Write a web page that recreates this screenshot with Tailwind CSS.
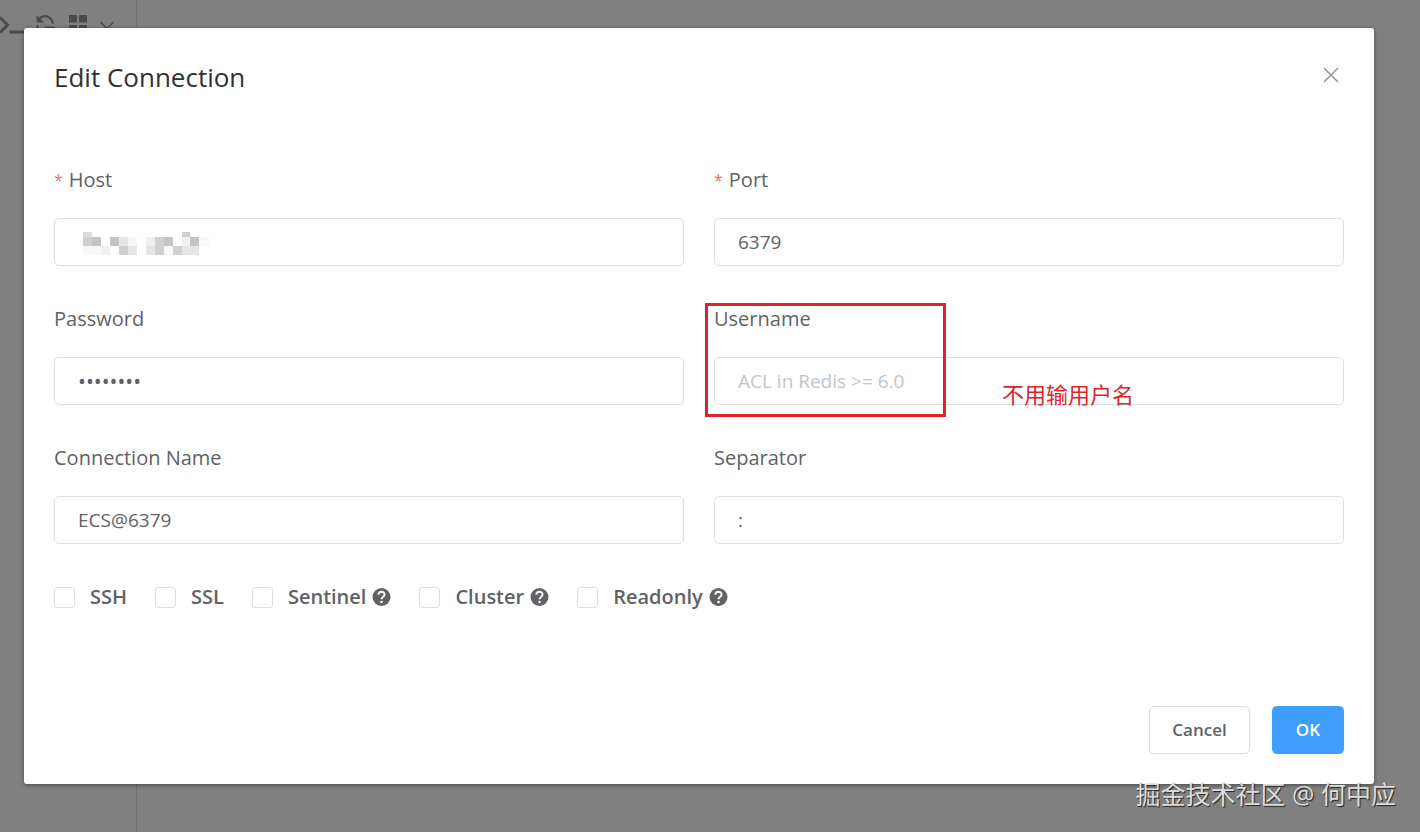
<!DOCTYPE html>
<html lang="en">
<head>
<meta charset="utf-8">
<meta name="viewport" content="width=device-width, initial-scale=1">
<title>Edit Connection</title>
<script src="https://cdn.jsdelivr.net/npm/@tailwindcss/browser@4"></script>
</head>
<body class="relative flex min-h-screen bg-[#808080] font-['Segoe_UI','Open_Sans','Noto_Sans_CJK_SC',sans-serif] text-[#606266]">

<!-- Dimmed page behind the dialog -->
<aside class="w-[137px] shrink-0 overflow-hidden border-r border-[#737373] pt-3" aria-hidden="true">
  <svg class="h-6 w-[120px]" viewBox="0 12 120 24" fill="none">
    <path d="M0 17.500L7.500 25L0 32.500" stroke="#4a4b4c" stroke-width="3"/>
    <path d="M9.500 32H26" stroke="#4a4b4c" stroke-width="3"/>
    <path d="M39 19C43 14.500 51 15 53 23.500" stroke="#4a4b4c" stroke-width="2.400"/>
    <path d="M36.500 15V22.500H44Z" fill="#4a4b4c"/>
    <path d="M37 25L38.500 29M46.500 27.500H54V33Z" stroke="#4a4b4c" stroke-width="2"/>
    <path d="M69 15h8v7.500h-8zM79 15h8v7.500h-8zM69 25h8v8h-8zM79 25h8v8h-8z" fill="#4a4b4c"/>
    <path d="M100.500 22L107 28.500L113.500 22" stroke="#4a4b4c" stroke-width="1.300"/>
  </svg>
</aside>

<div class="absolute inset-x-0 top-0 pt-7 pr-[46px] pb-12 pl-6">
<section role="dialog" aria-labelledby="title" class="relative rounded-[3px] bg-white p-[30px] shadow-[0_1px_4px_rgba(0,0,0,0.45)]">
  <header class="flex h-[92px] items-start justify-between">
    <h1 id="title" class="text-[26px] leading-[38px] text-[#303133]">Edit Connection</h1>
    <button type="button" aria-label="Close" class="mt-2 mr-1 size-[18px]">
      <svg viewBox="0 0 18 18" fill="none" stroke="#909399" stroke-width="1.500"><path d="M2 2L16 16M16 2L2 16"/></svg>
    </button>
  </header>

  <form>
    <div class="grid grid-cols-2 gap-x-[30px]">
      <div class="mb-[23px]">
        <label for="host" class="mb-2 flex text-[20px] leading-[60px]"><span class="mr-1.5 text-[16px] text-[#f56c6c]">*</span>Host</label>
        <div class="relative">
          <input id="host" type="text" class="block h-12 w-full rounded-[5px] border border-[#dcdfe6] px-[23px] text-[19px]">
          <svg class="absolute top-3 left-7 h-7 w-32" viewBox="0 0 128 28" shape-rendering="crispEdges" aria-hidden="true">
            <path fill="#f8f8f8" d="M1 16h18v9h-18zM118 7h9v9h-9zM46 7h9v9h-9zM82 16h9v9h-9z"/>
            <path fill="#f0f0f0" d="M19 16h9v9h-9zM64 7h9v9h-9zM100 7h8v9h-8z"/>
            <path fill="#e5e5e5" d="M37 7h9v9h-9zM46 16h9v9h-9zM64 16h9v9h-9zM100 16h17v9h-17z"/>
            <path fill="#dadada" d="M1 2h9v5H1z"/>
            <path fill="#d0d0d0" d="M1 7h9v9H1zM37 16h9v9h-9zM73 7h9v18h-9zM91 16h9v9h-9zM100 2h8v5h-8z"/>
            <path fill="#c4c4c4" d="M10 7h9v9h-9zM28 7h9v9h-9zM82 7h9v9h-9zM108 7h9v9h-9z"/>
          </svg>
        </div>
      </div>
      <div class="mb-[23px]">
        <label for="port" class="mb-2 flex text-[20px] leading-[60px]"><span class="mr-1.5 text-[16px] text-[#f56c6c]">*</span>Port</label>
        <input id="port" type="text" value="6379" class="block h-12 w-full rounded-[5px] border border-[#dcdfe6] px-[23px] text-[19px]">
      </div>
      <div class="mb-[23px]">
        <label for="password" class="mb-2 block text-[20px] leading-[60px]">Password</label>
        <input id="password" type="password" value="password" class="block h-12 w-full rounded-[5px] border border-[#dcdfe6] px-[23px] text-[21px]">
      </div>
      <div class="relative mb-[23px]">
        <label for="username" class="mb-2 block text-[20px] leading-[60px]">Username</label>
        <input id="username" type="text" placeholder="ACL in Redis &gt;= 6.0" class="block h-12 w-full rounded-[5px] border border-[#dcdfe6] px-[23px] text-[19px] placeholder:text-[#c0c4cc]">
        <div class="absolute top-[14px] -left-[9px] h-[114px] w-[241px] border-3 border-[#d9252b]"></div>
        <p class="absolute top-[89px] left-[288px] text-[22px] leading-8 text-[#d9252b]">不用输用户名</p>
      </div>
      <div class="mb-[23px]">
        <label for="name" class="mb-2 block text-[20px] leading-[60px]">Connection Name</label>
        <input id="name" type="text" value="ECS@6379" class="block h-12 w-full rounded-[5px] border border-[#dcdfe6] px-[23px] text-[19px]">
      </div>
      <div class="mb-[23px]">
        <label for="separator" class="mb-2 block text-[20px] leading-[60px]">Separator</label>
        <input id="separator" type="text" value=":" class="block h-12 w-full rounded-[5px] border border-[#dcdfe6] px-[23px] text-[19px]">
      </div>
    </div>

    <div class="flex h-[60px] items-center gap-7 text-[20px] font-semibold">
      <label class="flex items-center gap-[15px]"><input type="checkbox" class="size-[21px] appearance-none rounded-[3px] border border-[#dcdfe6]">SSH</label>
      <label class="flex items-center gap-[15px]"><input type="checkbox" class="size-[21px] appearance-none rounded-[3px] border border-[#dcdfe6]">SSL</label>
      <label class="flex items-center gap-[15px]"><input type="checkbox" class="size-[21px] appearance-none rounded-[3px] border border-[#dcdfe6]">
        <span class="flex items-center gap-1.5">Sentinel
          <svg class="size-[19px]" viewBox="0 0 19 19" fill="none"><circle cx="9.500" cy="9" r="9" fill="#606266"/><path d="M6.400 6.800C6.400 2.800 12.600 2.800 12.600 6.500C12.600 8.700 9.500 8.700 9.500 11.300" stroke="#fff" stroke-width="2"/><circle cx="9.500" cy="14" r="1.300" fill="#fff"/></svg>
        </span></label>
      <label class="flex items-center gap-[15px]"><input type="checkbox" class="size-[21px] appearance-none rounded-[3px] border border-[#dcdfe6]">
        <span class="flex items-center gap-1.5">Cluster
          <svg class="size-[19px]" viewBox="0 0 19 19" fill="none"><circle cx="9.500" cy="9" r="9" fill="#606266"/><path d="M6.400 6.800C6.400 2.800 12.600 2.800 12.600 6.500C12.600 8.700 9.500 8.700 9.500 11.300" stroke="#fff" stroke-width="2"/><circle cx="9.500" cy="14" r="1.300" fill="#fff"/></svg>
        </span></label>
      <label class="flex items-center gap-[15px]"><input type="checkbox" class="size-[21px] appearance-none rounded-[3px] border border-[#dcdfe6]">
        <span class="flex items-center gap-1.5">Readonly
          <svg class="size-[19px]" viewBox="0 0 19 19" fill="none"><circle cx="9.500" cy="9" r="9" fill="#606266"/><path d="M6.400 6.800C6.400 2.800 12.600 2.800 12.600 6.500C12.600 8.700 9.500 8.700 9.500 11.300" stroke="#fff" stroke-width="2"/><circle cx="9.500" cy="14" r="1.300" fill="#fff"/></svg>
        </span></label>
    </div>

    <footer class="mt-[79px] flex justify-end gap-[22px] font-semibold">
      <button type="button" class="h-12 rounded-[5px] border border-[#dcdfe6] px-[22px] text-[17px]">Cancel</button>
      <button type="submit" class="h-12 rounded-[5px] bg-[#409eff] px-6 text-[17px] text-white">OK</button>
    </footer>
  </form>
</section>
</div>

<p class="absolute right-6 bottom-5 text-[25px] leading-9 text-[#dcdcdc] [text-shadow:1px_1px_1px_#222]">掘金技术社区 @ 何中应</p>
</body>
</html>
